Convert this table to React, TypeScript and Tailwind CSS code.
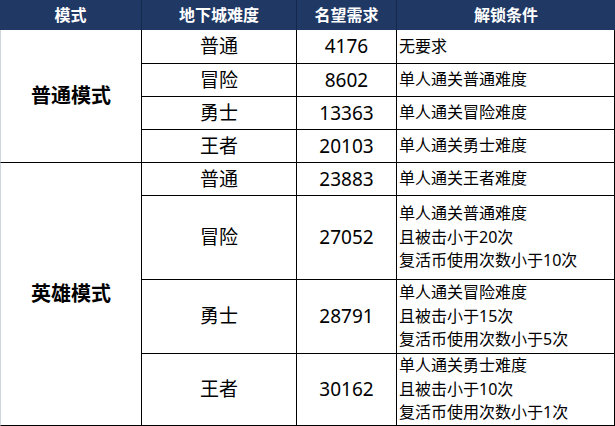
import React from "react";

type Row = { level: string; fame: string; cond: string[]; h: string };

const normal: Row[] = [
  { level: "普通", fame: "4176", cond: ["无要求"], h: "h-[34px]" },
  { level: "冒险", fame: "8602", cond: ["单人通关普通难度"], h: "h-[33px]" },
  { level: "勇士", fame: "13363", cond: ["单人通关冒险难度"], h: "h-[33px]" },
  { level: "王者", fame: "20103", cond: ["单人通关勇士难度"], h: "h-[33px]" },
];

const hero: Row[] = [
  { level: "普通", fame: "23883", cond: ["单人通关王者难度"], h: "h-[33px]" },
  {
    level: "冒险",
    fame: "27052",
    cond: ["单人通关普通难度", "且被击小于20次", "复活币使用次数小于10次"],
    h: "h-[84px]",
  },
  {
    level: "勇士",
    fame: "28791",
    cond: ["单人通关冒险难度", "且被击小于15次", "复活币使用次数小于5次"],
    h: "h-[74px]",
  },
  {
    level: "王者",
    fame: "30162",
    cond: ["单人通关勇士难度", "且被击小于10次", "复活币使用次数小于1次"],
    h: "h-[72px]",
  },
];

function Rows({ rows }: { rows: Row[] }) {
  return (
    <div className="flex flex-col">
      {rows.map((r, i) => (
        <div key={i} className={`flex ${r.h} border-b border-black`}>
          <div className="w-[155px] shrink-0 border-r border-black flex items-center justify-center text-[19px] leading-none">
            {r.level}
          </div>
          <div className="w-[100px] shrink-0 border-r border-black flex items-center justify-center text-[19px] leading-none">
            {r.fame}
          </div>
          <div className="w-[218px] shrink-0 border-r border-black flex flex-col justify-center pl-[2px] text-[16px] leading-[23.5px]">
            {r.cond.map((c, j) => (
              <div key={j}>{c}</div>
            ))}
          </div>
        </div>
      ))}
    </div>
  );
}

function Group({ label, rows }: { label: string; rows: Row[] }) {
  return (
    <div className="flex">
      <div className="w-[142px] shrink-0 border-l border-l-gray-300 border-r border-r-black border-b border-b-black flex items-center justify-center font-bold text-[20px]">
        {label}
      </div>
      <Rows rows={rows} />
    </div>
  );
}

export default function App() {
  return (
    <div
      className="w-[615px] h-[426px] bg-white text-black overflow-hidden"
      style={{ fontFamily: '"Noto Sans", "Noto Sans CJK SC", sans-serif' }}
    >
      <div className="flex h-[30px] bg-[#1f3864] text-white font-bold text-[16px]">
        <div className="w-[142px] border-r border-[#15294d] flex items-center justify-center">模式</div>
        <div className="w-[155px] border-r border-[#15294d] flex items-center justify-center">地下城难度</div>
        <div className="w-[100px] border-r border-[#15294d] flex items-center justify-center">名望需求</div>
        <div className="w-[218px] flex items-center justify-center">解锁条件</div>
      </div>
      <Group label="普通模式" rows={normal} />
      <Group label="英雄模式" rows={hero} />
    </div>
  );
}
